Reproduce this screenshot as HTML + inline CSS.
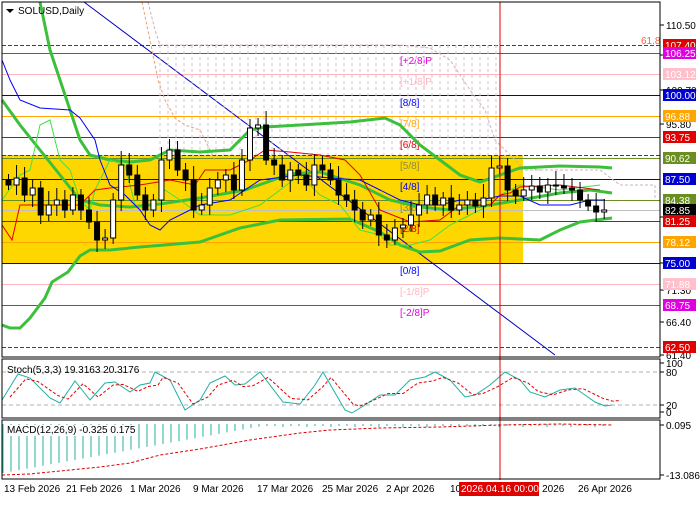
<!DOCTYPE html><html><head><style>
body{margin:0;background:#fff;width:700px;height:500px;overflow:hidden;font-family:"Liberation Sans",sans-serif}
svg text{font-family:"Liberation Sans",sans-serif;font-size:10px}
</style></head><body>
<svg id="s" width="700" height="500" xmlns="http://www.w3.org/2000/svg">
<rect x="0" y="0" width="700" height="500" fill="#fff"/>
<rect x="2" y="155" width="521" height="108" fill="#ffd700"/>
<g id="lines"></g>
<g id="ind"></g>
<g id="c"></g>
<line x1="500" y1="2" x2="500" y2="480" stroke="#e00000" stroke-width="1"/>
<rect x="2" y="2" width="658" height="355" fill="none" stroke="#000"/>
<rect x="2" y="359" width="658" height="59" fill="none" stroke="#000"/>
<rect x="2" y="420" width="658" height="59" fill="none" stroke="#000"/>
<polygon points="6,9 14,9 10,13" fill="#000"/>
<text x="18" y="14" font-size="11" fill="#000">SOLUSD,Daily</text>
<g id="ax"></g>
<g font-size="10" fill="#000">
<text x="4" y="492">13 Feb 2026</text><text x="66" y="492">21 Feb 2026</text><text x="130" y="492">1 Mar 2026</text>
<text x="193" y="492">9 Mar 2026</text><text x="257" y="492">17 Mar 2026</text><text x="322" y="492">25 Mar 2026</text>
<text x="386" y="492">2 Apr 2026</text><text x="450" y="492">10</text><text x="536" y="492">r 2026</text><text x="578" y="492">26 Apr 2026</text>
</g>
<rect x="459" y="482" width="80" height="14" fill="#e00000"/>
<text x="461" y="492" fill="#fff">2026.04.16 00:00</text>
</svg>
<script>
const NS="http://www.w3.org/2000/svg";
function el(p,t,a,txt){const e=document.createElementNS(NS,t);for(const k in a)e.setAttribute(k,a[k]);if(txt!==undefined)e.textContent=txt;(typeof p=="string"?document.getElementById(p):p).appendChild(e);return e;}
const L=[[45,"#e00000",1,"4,2"],[53,"#e000e0",1],[74,"#ffb6c1",1],[95,"#0000c0",1],[116,"#ffa500",1],[137,"#e00000",1],[155,"#e00000",1,"4,2"],[158,"#6b8e23",1],[179,"#0000c0",1],[200,"#6b8e23",1],[210,"#c0c0c0",1],[221,"#e00000",1],[242,"#ffa500",1],[263,"#0000c0",1],[284,"#ffb6c1",1],[305,"#e000e0",1],[347,"#e00000",1,"4,2"]];
L.forEach(l=>el("lines","line",{x1:2,x2:660,y1:l[0]+.5,y2:l[0]+.5,stroke:l[1],"stroke-width":l[2],"stroke-dasharray":l[3]||"none"}));
[["[+2/8]P",61,"#e000e0"],["[+1/8]P",82,"#ffb6c1"],["[8/8]",103,"#0000ff"],["[7/8]",124,"#ffa500"],["[6/8]",145,"#e00000"],["[5/8]",166,"#8b8b3a"],["[4/8]",187,"#0000ff"],["[3/8]",208,"#8b8b3a"],["[2/8]",229,"#e00000"],["[0/8]",271,"#0000ff"],["[-1/8]P",292,"#ffb6c1"],["[-2/8]P",313,"#e000e0"]].forEach(t=>el("lines","text",{x:400,y:t[1]+3,fill:t[2],"font-size":"11"},t[0]));
el("lines","text",{x:641,y:44,fill:"#ff6030","font-size":"9"},"61.8");
el("ind","line",{x1:84,y1:2,x2:555,y2:355,stroke:"#0000c0","stroke-width":1});
function pl(pts,c,w,d){el("ind","polyline",{points:pts,fill:"none",stroke:c,"stroke-width":w,"stroke-dasharray":d||"none"});}
pl("142,2 150,40 158,80 165,100 175,118 185,125 200,130 210,150 215,160","#f0a070",1,"3,2");
pl("148,2 155,30 160,45 400,45 430,48 450,60 470,90 485,110 495,140 505,150 520,165 540,170","#d0b0c0",1,"3,2");
for(let x=160;x<500;x+=8){el("ind","line",{x1:x,y1:45,x2:x,y2:155,stroke:"#d8c0d0","stroke-width":1,"stroke-dasharray":"3,3"});}
pl("520,170 600,170 620,185 655,185 655,200","#d0b0c0",1,"3,2");
pl("40,2 50,50 60,80 70,110 80,140 90,155 110,160 130,162 150,160 170,150 200,152 230,150 250,130 265,127 300,125 350,122 385,118 400,125 420,145 440,160 460,175 480,182 500,175 520,168 560,166 600,167 612,168","#3cc03c",3);
pl("2,100 20,125 40,150 60,175 80,200 100,205 130,207 160,204 200,198 245,190 290,174 320,172 360,185 390,200 420,207 450,210 490,205 520,200 560,193 590,190 612,193","#3cc03c",3);
pl("2,325 10,328 20,328 30,318 45,298 52,282 68,272 80,256 90,250 110,250 140,247 200,242 240,228 280,220 350,219 380,232 400,245 420,252 440,251 470,240 500,238 520,239 540,240 560,230 580,222 612,218","#3cc03c",3);
pl("2,200 20,175 30,170 40,125 50,120 60,160 70,170 80,200 90,210 95,190 110,160 125,165 135,205 150,210 165,190 180,200 200,215 230,215 260,205 280,190 300,175 320,195 340,205 360,230 380,235 390,245 410,245 430,240 450,225 470,215 490,205 500,195 520,185 560,190 600,185","#40e040",1);
pl("2,225 12,240 20,205 50,205 80,205 95,190 110,188 140,185 170,180 195,185 205,170 230,170 250,160 265,150 290,152 320,155 345,160 360,175 380,210 410,222 440,220 460,205 490,205 500,195 510,193 520,187 560,185 600,190","#e00000",1);
pl("2,60 10,80 20,100 40,108 70,110 80,118 95,140 100,160 110,185 125,195 140,210 150,225 160,230 170,220 200,205 230,200 260,180 300,175 330,178 360,180 380,190 400,200 420,205 440,205 460,200 480,200 500,196 520,196 540,205 570,205 590,200 605,200","#0000ff",1);
const ys=[185,178,195,188,215,205,200,210,195,210,222,240,238,200,165,175,195,210,200,160,150,170,180,210,205,188,180,175,190,160,128,125,160,165,180,170,175,185,165,170,180,195,200,210,220,215,235,240,228,225,215,205,195,205,198,210,205,200,206,198,168,166,190,196,190,186,192,185,186,188,190,200,206,212,210];
let prev=180;
ys.forEach((c,i)=>{const x=6+i*8.05;const o=prev;const top=Math.min(o,c),bot=Math.max(o,c);const hi=top-6-(i*7%9),lo=bot+5+(i*5%8);
el("c","line",{x1:x+2.5,x2:x+2.5,y1:hi,y2:lo,stroke:"#000"});
el("c","rect",{x:x,y:top,width:5,height:Math.max(1,bot-top),fill:c<o?"#fff":"#000",stroke:"#000","stroke-width":1});prev=c;});
// stoch
el("ind","line",{x1:2,x2:660,y1:372,y2:372,stroke:"#b0b0b0","stroke-dasharray":"4,3"});
el("ind","line",{x1:2,x2:660,y1:405,y2:405,stroke:"#b0b0b0","stroke-dasharray":"4,3"});
const sk="2,400 18,374 30,378 50,398 60,403 75,381 90,400 105,383 115,382 130,392 140,385 150,383 155,372 170,380 185,410 200,400 210,383 225,376 235,385 245,384 260,372 283,402 300,404 315,385 323,372 345,410 352,413 365,405 380,395 395,395 410,380 425,377 435,372 450,380 465,397 475,395 490,385 505,372 520,380 530,392 545,397 560,390 575,388 585,395 595,402 605,406 612,405";
pl(sk,"#20b0a0",1);
pl(sk.split(" ").map(p=>{const [x,y]=p.split(",").map(Number);return (x+8)+","+(y*0.7+390*0.3);}).join(" "),"#e00000",1,"3,2");
el("ind","text",{x:7,y:373,"font-size":"9"},"Stoch(5,3,3) 19.3163 20.3176");
// macd
for(let i=0;i<76;i++){const x=3+i*8;let h;if(i<34){h=473-i*1.45;}else{h=425+(i%3);}
el("ind","line",{x1:x,x2:x,y1:424,y2:Math.max(426,h),stroke:"#20b0a0"});}
pl("2,475 30,474 60,471 100,467 130,463 160,455 200,449 250,440 300,433 330,430 380,428 440,427 500,425 560,424 612,425","#e00000",1,"3,2");
el("ind","rect",{x:6,y:425,width:130,height:11,fill:"#fff"});
el("ind","text",{x:7,y:433,"font-size":"9"},"MACD(12,26,9) -0.325 0.175");
const ax=[[25,"110.50"],[55,"105.60"],[90,"100.70"],[124,"95.80"],[217,"86.00"],[263,"76.20"],[290,"71.30"],[322,"66.40"],[355,"61.40"]];
ax.forEach(a=>{el("ax","line",{x1:660,x2:664,y1:a[0],y2:a[0],stroke:"#000"});el("ax","text",{x:666,y:a[0]+4},a[1]);});
const bx=[[45,"107.40","#e00000","#fff"],[53,"106.25","#e000e0","#fff"],[74,"103.12","#ffc0cb","#fff"],[95,"100.00","#0000d0","#fff"],[116,"96.88","#ffa500","#fff"],[137,"93.75","#e00000","#fff"],[158,"90.62","#6b8e23","#fff"],[179,"87.50","#0000d0","#fff"],[200,"84.38","#6b8e23","#fff"],[210,"82.85","#000","#fff"],[221,"81.25","#e00000","#fff"],[242,"78.12","#ffa500","#fff"],[263,"75.00","#0000d0","#fff"],[284,"71.88","#ffc0cb","#fff"],[305,"68.75","#e000e0","#fff"],[347,"62.50","#e00000","#fff"]];
bx.forEach(b=>{el("ax","rect",{x:663,y:b[0]-6,width:33,height:12,fill:b[2]});el("ax","text",{x:665,y:b[0]+4,fill:b[3]},b[1]);});
[[363,"100"],[372,"80"],[405,"20"],[412,"0"],[425,"0.095"],[475,"-13.086"]].forEach(a=>{el("ax","line",{x1:660,x2:664,y1:a[0],y2:a[0],stroke:"#000"});el("ax","text",{x:666,y:a[0]+4},a[1]);});
</script>
</body></html>
